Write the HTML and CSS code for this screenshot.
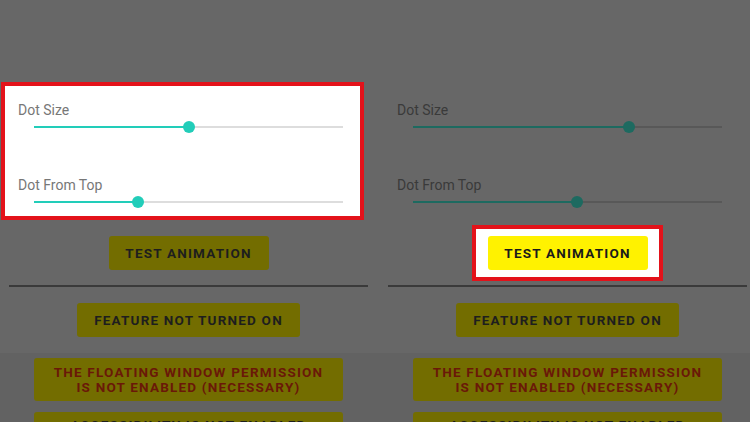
FILE: index.html
```html
<!DOCTYPE html>
<html lang="en">
<head>
  <meta charset="UTF-8">
  <meta name="viewport" content="width=device-width, initial-scale=1.0">
  <title>Dot settings</title>
  <link rel="stylesheet" href="styles.css">
</head>
<body>
  <div class="screens">
    <div class="screen">
      <div class="settings marked">
        <div class="label">Dot Size</div>
        <div class="slider"><div class="fill" style="width:50%"></div><div class="thumb" style="left:50%"></div></div>
        <div class="label second">Dot From Top</div>
        <div class="slider"><div class="fill" style="width:33.5%"></div><div class="thumb" style="left:33.5%"></div></div>
      </div>
      <div class="test-wrap">
        <button class="btn test">Test Animation</button>
      </div>
      <hr class="divider">
      <div class="feature-row">
        <button class="btn feature">Feature not turned on</button>
      </div>
      <div class="status">
        <button class="btn warn">The floating window permission<br>is not enabled (necessary)</button>
        <button class="btn warn last">Accessibility is not enabled</button>
      </div>
    </div>

    <div class="screen">
      <div class="settings">
        <div class="label">Dot Size</div>
        <div class="slider"><div class="fill" style="width:70%"></div><div class="thumb" style="left:70%"></div></div>
        <div class="label second">Dot From Top</div>
        <div class="slider"><div class="fill" style="width:53%"></div><div class="thumb" style="left:53%"></div></div>
      </div>
      <div class="test-wrap marked">
        <button class="btn test">Test Animation</button>
      </div>
      <hr class="divider">
      <div class="feature-row">
        <button class="btn feature">Feature not turned on</button>
      </div>
      <div class="status">
        <button class="btn warn">The floating window permission<br>is not enabled (necessary)</button>
        <button class="btn warn last">Accessibility is not enabled</button>
      </div>
    </div>
  </div>
</body>
</html>
```

FILE: styles.css
```css
body { margin: 0; background: #676767; font-family: Roboto, "Liberation Sans", sans-serif; overflow: hidden; height: 422px; }
.screens { display: flex; gap: 2px; padding-top: 82px; }
.screen { width: 377px; flex: none; display: flex; flex-direction: column; }

/* sliders card */
.settings { width: 363px; margin-left: 1px; box-sizing: border-box; height: 138px; border: 4px solid transparent; padding: 16px 0 0 13px; }
.label { font-size: 14px; line-height: 16px; color: #3a3a3a; }
.label.second { margin-top: 44px; }
.slider { position: relative; height: 12px; margin: 3px 0 0 16px; width: 309px; }
.slider::before { content: ""; position: absolute; left: 0; right: 0; top: 5px; height: 2px; background: #585858; }
.fill { position: absolute; left: 0; top: 5px; height: 2px; background: #1d6a60; }
.thumb { position: absolute; top: 0; width: 12px; height: 12px; margin-left: -6px; border-radius: 50%; background: #1d6a60; }

/* highlighted parts */
.marked { border: 4px solid #e3121a; background: #fff; }
.settings.marked .label { color: #777; }
.settings.marked .slider::before { background: #ddd; }
.settings.marked .fill, .settings.marked .thumb { background: #22cdb9; }

/* buttons */
.btn { display: block; border: none; border-radius: 3px; background: #736d00; color: #1e1e1e; font-family: Roboto, "Liberation Sans", sans-serif; font-weight: 700; font-size: 13.5px; letter-spacing: 1.2px; text-transform: uppercase; padding: 0; }
.test-wrap { align-self: center; margin-top: 5px; width: 191px; height: 56px; box-sizing: border-box; border: 4px solid transparent; display: flex; justify-content: center; align-items: center; }
.btn.test { width: 160px; height: 34px; }
.test-wrap.marked { border-color: #e3121a; background: #fff; }
.test-wrap.marked .btn { background: #fff200; color: #1a1a1a; }

.divider { margin: 4px 9px 0; border: none; height: 2px; background: #3a3a3a; }
.feature-row { display: flex; justify-content: center; padding: 16px 0 16px; }
.btn.feature { width: 223px; height: 34px; }

.status { background: #626262; display: flex; flex-direction: column; align-items: center; gap: 11px; padding-top: 5px; box-shadow: 2px 0 0 #626262; }
.btn.warn { width: 309px; height: 43px; color: #6a1808; line-height: 15px; }
.btn.warn.last { height: 22px; line-height: 14px; padding-top: 3px; color: #1e1e1e; }
```
